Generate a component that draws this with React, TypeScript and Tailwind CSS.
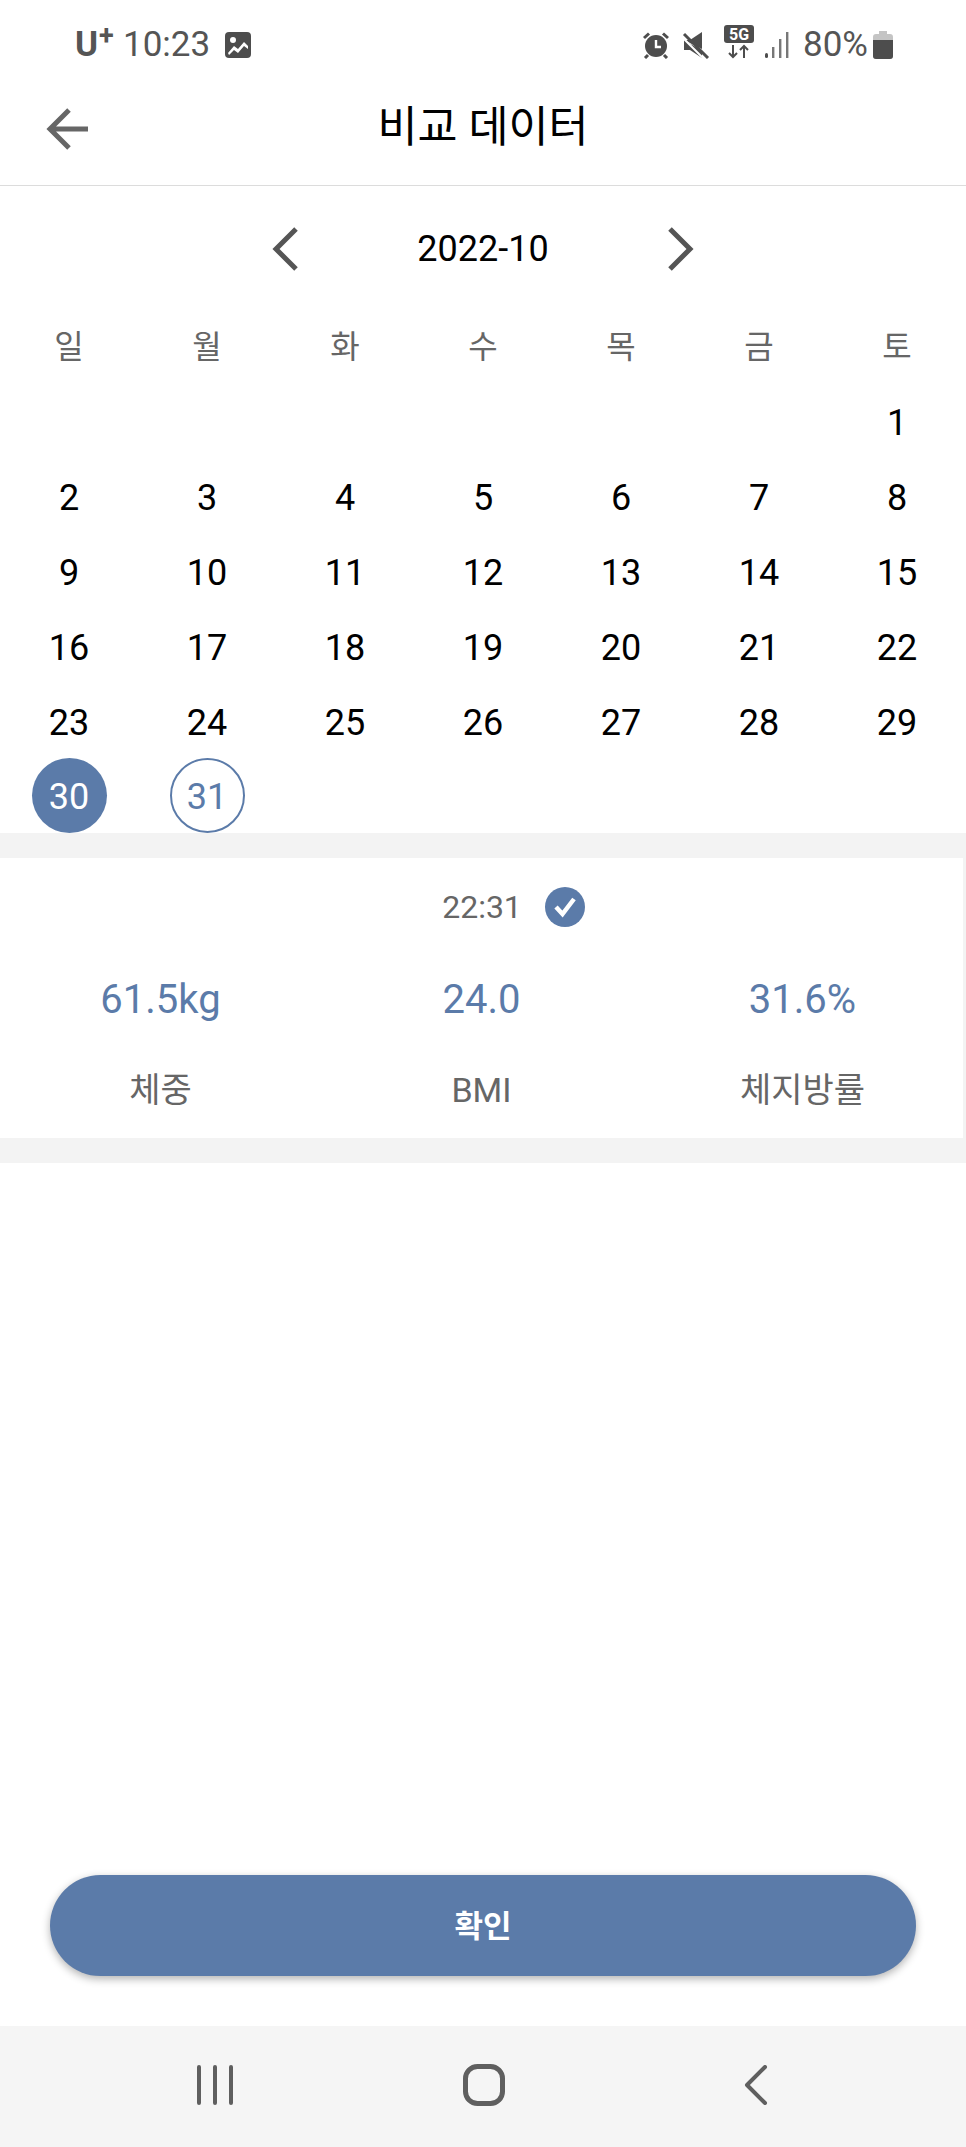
import React from "react";

const weekdays = ["일", "월", "화", "수", "목", "금", "토"];
const days: (number | null)[] = [null, null, null, null, null, null, ...Array.from({ length: 31 }, (_, i) => i + 1)];

function StatusLeft() {
  return (
    <div className="flex items-center">
      <span className="relative text-[35px] leading-[40px] font-bold text-[#555] w-[38px]">
        U<span className="absolute left-[24px] top-[-9px] text-[27px] font-bold">+</span>
      </span>
      <span className="ml-[10px] text-[35px] leading-[40px] text-[#555]">10:23</span>
      <svg className="ml-[15px]" width="26" height="26" viewBox="0 0 26 26">
        <rect width="26" height="26" rx="4" fill="#4d4d4d" />
        <circle cx="8" cy="8" r="3" fill="#fff" />
        <path d="M3 21 L9 14 L13 17 L19 10 L23 14 L23 17 L19 14 L13 21 L9 18 L4 23 Z" fill="#fff" />
      </svg>
    </div>
  );
}

function StatusRight() {
  return (
    <div className="flex items-center">
      <svg width="28" height="28" viewBox="0 0 28 28">
        <circle cx="14" cy="15" r="11" fill="#4d4d4d" />
        <path d="M14 9v7h5" stroke="#fff" strokeWidth="2.4" fill="none" />
        <path d="M2 7 L7 2.5M26 7 L21 2.5" stroke="#4d4d4d" strokeWidth="3" />
        <path d="M6 24 L3 27M22 24 L25 27" stroke="#4d4d4d" strokeWidth="3" />
      </svg>
      <svg className="ml-[12px]" width="28" height="28" viewBox="0 0 28 28">
        <path d="M2 9 H8 L20 1 V18 Z M2 9 V19 H8 L20 27 V20 Z" fill="#4d4d4d" />
        <path d="M2 3 L26 27" stroke="#4d4d4d" strokeWidth="3" />
        <path d="M0.5 6.5 L22 28" stroke="#fff" strokeWidth="2" />
      </svg>
      <svg className="ml-[14px] -mt-[6px]" width="30" height="34" viewBox="0 0 30 34">
        <rect width="30" height="18" rx="3" fill="#4d4d4d" />
        <text x="15" y="15" textAnchor="middle" fontFamily="Roboto" fontWeight="700" fontSize="16" fill="#fff">5G</text>
        <path d="M9 20v12M5 28l4 4 4-4M20 33V21M16 25l4-4 4 4" stroke="#4d4d4d" strokeWidth="2" fill="none" />
      </svg>
      <svg className="ml-[10px]" width="26" height="28" viewBox="0 0 26 28">
        <rect x="1" y="22" width="3" height="5" rx="1.5" fill="#4d4d4d" />
        <rect x="8" y="16" width="2.4" height="11" fill="#777" />
        <rect x="15" y="8" width="2.4" height="19" fill="#777" />
        <rect x="22" y="1" width="2.4" height="26" fill="#777" />
      </svg>
      <span className="ml-[13px] text-[35px] leading-[40px] text-[#555]">80%</span>
      <svg className="ml-[5px]" width="20" height="28" viewBox="0 0 20 28">
        <path d="M6 0h8v3h3a3 3 0 0 1 3 3v19a3 3 0 0 1-3 3H3a3 3 0 0 1-3-3V6a3 3 0 0 1 3-3h3Z" fill="#c4c4c4" />
        <path d="M0 9h20v16a3 3 0 0 1-3 3H3a3 3 0 0 1-3-3Z" fill="#4d4d4d" />
      </svg>
    </div>
  );
}

function Day({ d }: { d: number | null }) {
  if (d === null) return <div className="h-[75px]" />;
  if (d === 30)
    return (
      <div className="h-[75px] flex items-center justify-center">
        <div className="w-[75px] h-[75px] pt-[3px] rounded-full bg-[#5b7ba9] text-white flex items-center justify-center">{d}</div>
      </div>
    );
  if (d === 31)
    return (
      <div className="h-[75px] flex items-center justify-center">
        <div className="w-[75px] h-[75px] pt-[3px] rounded-full border-2 border-[#5b7ba9] text-[#5b7ba9] flex items-center justify-center">{d}</div>
      </div>
    );
  return <div className="h-[75px] pt-[4px] flex items-center justify-center text-black">{d}</div>;
}

function Metric({ value, label }: { value: string; label: string }) {
  return (
    <div className="flex-1 flex flex-col items-center">
      <div className="h-[52px] flex items-center text-[40px] text-[#5b7ba9]">{value}</div>
      <div className="mt-[39px] h-[50px] flex items-center text-[34px] text-[#666]">{label}</div>
    </div>
  );
}

export default function App() {
  return (
    <div
      className="w-[966px] h-[2147px] flex flex-col bg-white overflow-hidden"
      style={{ fontFamily: 'Roboto, "Noto Sans CJK KR", sans-serif' }}
    >
      <div className="h-[72px] shrink-0 flex items-end justify-between pl-[75px] pr-[73px] pb-[7px]">
        <StatusLeft />
        <StatusRight />
      </div>

      <div className="h-[114px] shrink-0 relative flex items-center justify-center border-b border-[#dcdcdc]">
        <svg className="absolute left-[46px] top-[35px]" width="44" height="44" viewBox="0 0 44 44">
          <path d="M42 22H4M23 3 L4 22 L23 41" stroke="#666" strokeWidth="5" fill="none" />
        </svg>
        <span className="text-[43.5px] leading-[60px] text-black -mt-[2px]">비교 데이터</span>
      </div>

      <div className="h-[125px] shrink-0 flex items-center justify-center">
        <svg width="30" height="46" viewBox="0 0 30 46">
          <path d="M25 3 L5 23 L25 43" stroke="#555" strokeWidth="5" fill="none" />
        </svg>
        <span className="w-[364px] text-center text-[36px] text-black">2022-10</span>
        <svg width="30" height="46" viewBox="0 0 30 46">
          <path d="M5 3 L25 23 L5 43" stroke="#555" strokeWidth="5" fill="none" />
        </svg>
      </div>

      <div className="grid grid-cols-7 h-[72px] shrink-0">
        {weekdays.map((w) => (
          <div key={w} className="flex items-center justify-center text-[32px] text-[#666]">{w}</div>
        ))}
      </div>

      <div className="grid grid-cols-7 text-[36px] shrink-0">
        {days.map((d, i) => (
          <Day key={i} d={d} />
        ))}
      </div>

      <div className="h-[25px] bg-[#f3f3f3] shrink-0" />
      <div className="h-[280px] shrink-0 flex flex-col border-r-[3px] border-[#f3f3f3]">
        <div className="h-[100px] flex items-center justify-center pl-[64px] -mt-[1px]">
          <span className="text-[32px] text-[#666]">22:31</span>
          <svg className="ml-[23px]" width="40" height="40" viewBox="0 0 40 40">
            <circle cx="20" cy="20" r="20" fill="#5b7ba9" />
            <path d="M11 20 L17.5 27 L29 12" stroke="#fff" strokeWidth="4.5" fill="none" />
          </svg>
        </div>
        <div className="flex mt-[17px]">
          <Metric value="61.5kg" label="체중" />
          <Metric value="24.0" label="BMI" />
          <Metric value="31.6%" label="체지방률" />
        </div>
      </div>
      <div className="h-[25px] bg-[#f3f3f3] shrink-0" />

      <div className="flex-1 flex flex-col justify-end px-[50px] pb-[50px]">
        <button className="h-[101px] pt-[4px] rounded-full bg-[#5b7ba9] text-white font-bold text-[31px] shadow-[0_3px_8px_rgba(0,0,0,0.3)]">
          확인
        </button>
      </div>

      <div className="h-[121px] shrink-0 bg-[#f5f5f5] flex items-center">
        <div className="w-full flex pl-[196px] pb-[4px] items-center">
          <svg width="38" height="40" viewBox="0 0 38 40">
            <path d="M3 2v36M19 2v36M35 2v36" stroke="#5f5f5f" strokeWidth="4" strokeLinecap="round" />
          </svg>
          <svg className="ml-[229px]" width="42" height="42" viewBox="0 0 42 42">
            <rect x="2.5" y="2.5" width="37" height="37" rx="12" stroke="#5f5f5f" strokeWidth="5" fill="none" />
          </svg>
          <svg className="ml-[239px]" width="24" height="40" viewBox="0 0 24 40">
            <path d="M21 2 L3 20 L21 38" stroke="#5f5f5f" strokeWidth="4" fill="none" strokeLinecap="round" strokeLinejoin="round" />
          </svg>
        </div>
      </div>
    </div>
  );
}
